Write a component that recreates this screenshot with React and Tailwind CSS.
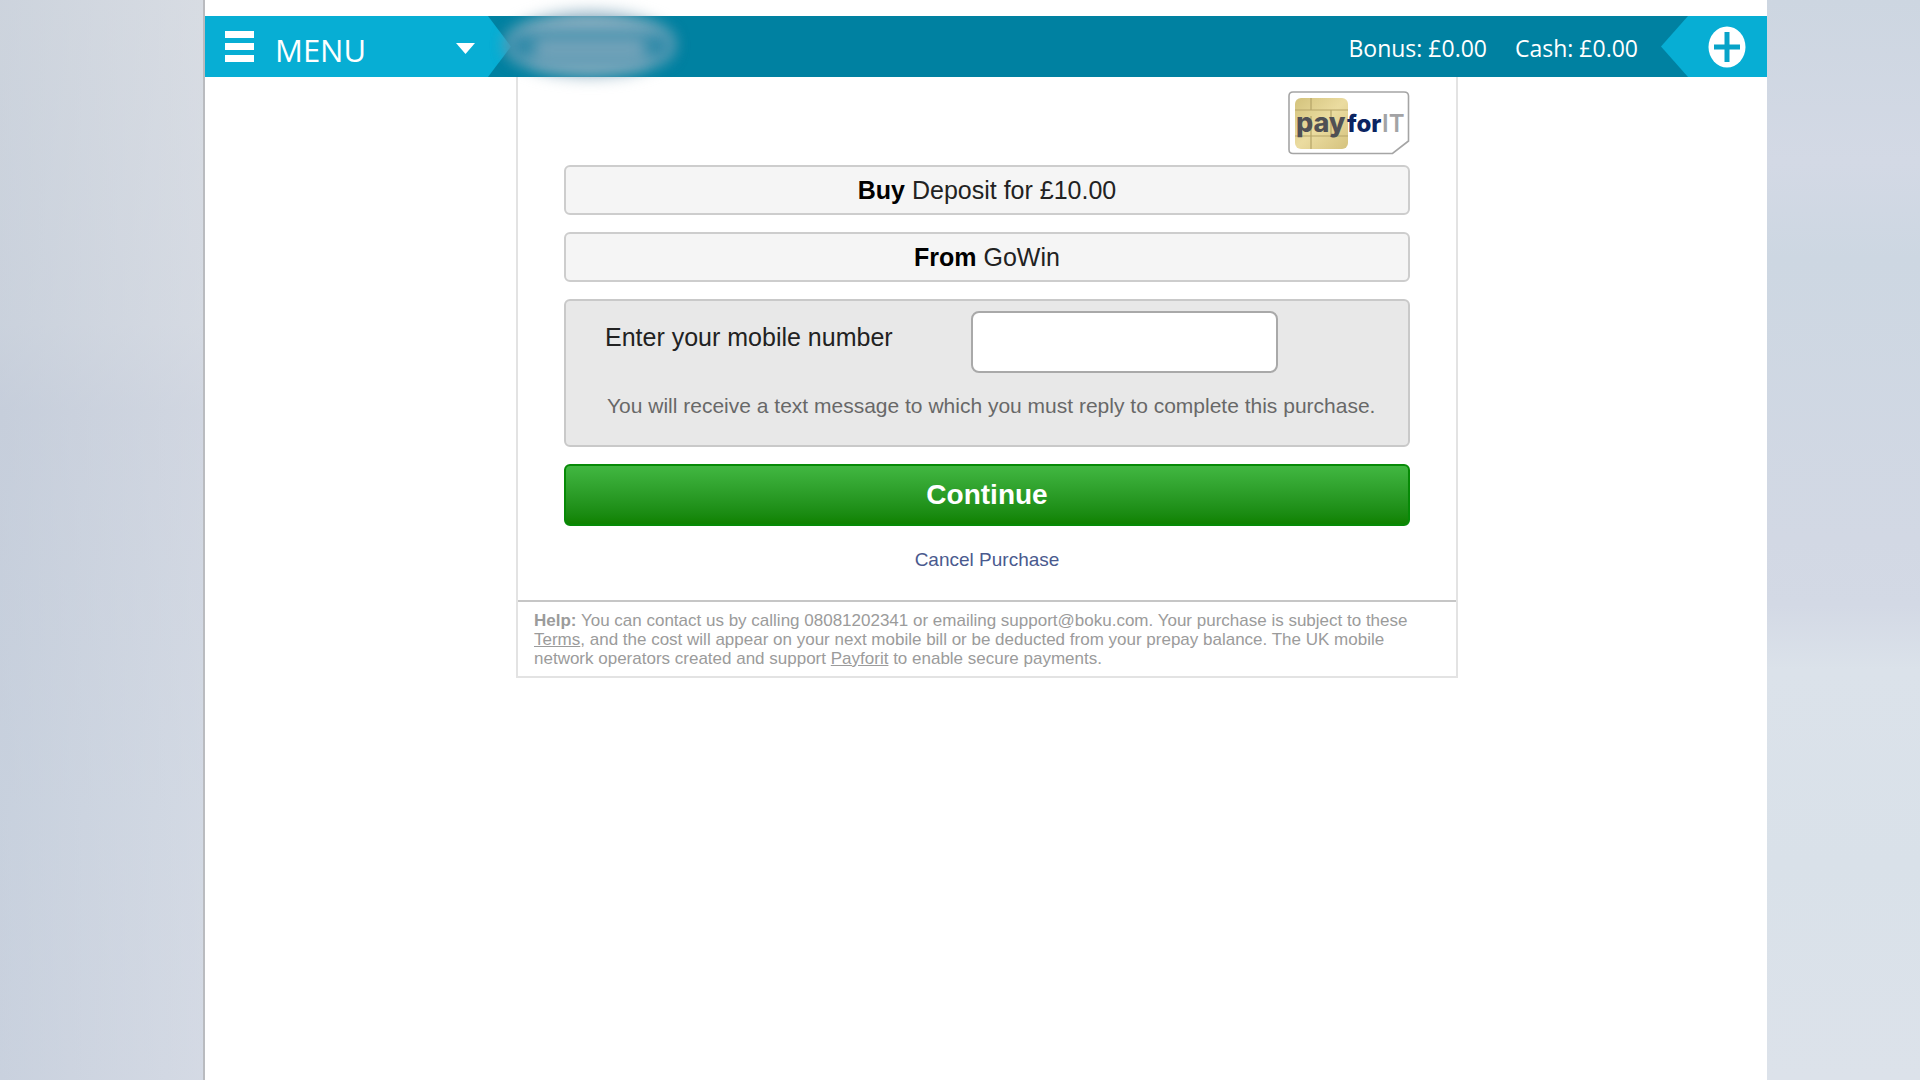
import { useState } from "react";

// =====================================================
// ICONS
// =====================================================

const PlusCircle = () => (
  <svg className="h-[42px] w-[38px]" viewBox="0 0 38 42" aria-hidden="true">
    <ellipse cx="19" cy="21" rx="18.5" ry="20.5" fill="#fff" />
    <path d="M19 6v30M6 21h26" stroke="#07a3c8" strokeWidth="5" />
  </svg>
);

const PayforitLogo = () => (
  <svg
    className="h-[64px] w-[122px]"
    viewBox="0 0 122 64"
    role="img"
    aria-label="payforit"
  >
    <defs>
      <linearGradient id="chip" x1="0" y1="0" x2="1" y2="1">
        <stop offset="0" stopColor="#d3c27c" />
        <stop offset="0.5" stopColor="#ebdca0" />
        <stop offset="1" stopColor="#d5c27e" />
      </linearGradient>
    </defs>
    {/* SIM card outline */}
    <path
      d="M5 1H116Q120.500 1 120.500 5V50L104.500 62.500H5Q1 62.500 1 58.500V5Q1 1 5 1Z"
      fill="#fff"
      stroke="#a5a5a5"
      strokeWidth="1.600"
    />
    {/* Chip */}
    <rect x="7" y="7" width="53" height="51" rx="6" fill="url(#chip)" />
    <path
      d="M7 19H23V7M23 19H43V45M43 19H60M7 45H60M23 45V58M43 45H60M23 25V45"
      fill="none"
      stroke="#b5a468"
      strokeWidth="1.200"
    />
    <g fontFamily="Inter, sans-serif">
      <text x="8" y="41" fontWeight="800" fontSize="27" fill="#505054">
        pay
      </text>
      <text x="59" y="41" fontWeight="800" fontSize="24" fill="#0b2461">
        for
      </text>
      <text x="94" y="41" fontWeight="600" fontSize="24" fill="#a3a3a5">
        IT
      </text>
    </g>
  </svg>
);

// =====================================================
// HEADER
// =====================================================

const Header = () => (
  <header className="relative flex h-[61px] items-stretch justify-between bg-[#0081a1] font-['Open_Sans','Noto_Sans',sans-serif] text-white">
    <button
      type="button"
      className="flex w-[306px] items-center bg-[#07aed4] pl-5 [clip-path:polygon(0_0,283px_0,100%_50%,283px_100%,0_100%)]"
    >
      <span className="flex flex-col gap-[5px]">
        <span className="h-[7px] w-[29px] bg-white" />
        <span className="h-[7px] w-[29px] bg-white" />
        <span className="h-[7px] w-[29px] bg-white" />
      </span>
      <span className="ml-[21px] pt-[6px] text-[31px] leading-10">MENU</span>
      <svg
        className="ml-auto mr-9 mt-1 h-[11px] w-[19px]"
        viewBox="0 0 19 11"
        aria-hidden="true"
      >
        <path d="M0 0h19l-9.500 11z" fill="#fff" />
      </svg>
    </button>

    {/* Obscured brand name */}
    <div
      className="absolute -top-1 left-[302px] h-[64px] w-[166px]"
      aria-hidden="true"
    >
      <div className="size-full rounded-[50%] bg-[#8fb0c2] blur-[8px]" />
      <div className="absolute inset-x-0 top-5 h-7 rounded-full bg-[#2f8aa9] blur-[8px]" />
      <div className="absolute inset-x-7 top-6 h-7 rounded-lg bg-[#6fa1b8] blur-[7px]" />
    </div>

    <div className="flex items-stretch">
      <div className="flex items-center gap-7 pr-[23px] pt-[2px] text-[23px] leading-8">
        <span>Bonus: £0.00</span>
        <span>Cash: £0.00</span>
      </div>
      <button
        type="button"
        aria-label="Add funds"
        className="flex w-[106px] items-center justify-end bg-[#07aed4] pr-[21px] [clip-path:polygon(27px_0,100%_0,100%_100%,27px_100%,0_50%)]"
      >
        <PlusCircle />
      </button>
    </div>
  </header>
);

// =====================================================
// PAYMENT CARD
// =====================================================

const SummaryRow = ({ label, value }) => (
  <p className="rounded-md border-2 border-[#cdcdcd] bg-[#f5f5f5] pb-[7px] pt-[7px] text-center text-[25px] leading-8 text-[#222]">
    <b className="text-black">{label}</b> {value}
  </p>
);

const PaymentForm = () => {
  const [mobile, setMobile] = useState("");

  return (
    <form
      className="flex flex-col px-[46px] pb-7 pt-[14px]"
      onSubmit={(e) => e.preventDefault()}
    >
      <div className="mb-[10px] flex justify-end">
        <PayforitLogo />
      </div>

      <div className="flex flex-col gap-[17px]">
        <SummaryRow label="Buy" value="Deposit for £10.00" />
        <SummaryRow label="From" value="GoWin" />

        <div className="rounded-md border-2 border-[#c9c9c9] bg-[#e8e8e8] pb-[27px] pl-[39px] pr-[130px] pt-[10px]">
          <div className="flex items-start justify-between">
            <label
              htmlFor="mobile"
              className="pt-[10px] text-[25px] leading-8 text-[#222]"
            >
              Enter your mobile number
            </label>
            <input
              id="mobile"
              type="tel"
              value={mobile}
              onChange={(e) => setMobile(e.target.value)}
              className="h-[62px] w-[307px] rounded-lg border-2 border-[#a9a9a9] bg-white px-3 text-[25px]"
            />
          </div>
          <p className="mt-[21px] whitespace-nowrap pl-[2px] text-[21px] leading-6 text-[#686868]">
            You will receive a text message to which you must reply to complete
            this purchase.
          </p>
        </div>

        <button
          type="submit"
          className="h-[62px] rounded-md border-2 border-[#078a07] bg-linear-to-b from-[#41b741] to-[#0f8200] text-[28px] font-bold leading-8 text-white"
        >
          Continue
        </button>
      </div>

      <a
        href="#cancel"
        className="mt-[22px] self-center text-[19px] leading-6 text-[#4a5a8e]"
      >
        Cancel Purchase
      </a>
    </form>
  );
};

const HelpText = () => (
  <p className="border-t-2 border-[#c6c6c6] px-4 pb-2 pt-[9px] text-[17px] leading-[19px] text-[#9b9b9b]">
    <b>Help:</b> You can contact us by calling 08081202341 or emailing
    support@boku.com. Your purchase is subject to these{" "}
    <a href="#terms" className="underline">
      Terms
    </a>
    , and the cost will appear on your next mobile bill or be deducted from your
    prepay balance. The UK mobile network operators created and support{" "}
    <a href="#payforit" className="underline">
      Payforit
    </a>{" "}
    to enable secure payments.
  </p>
);

// =====================================================
// PAGE
// =====================================================

export default function App() {
  return (
    <div className="grid min-h-screen grid-cols-[205fr_1562fr_153fr] bg-white font-['Liberation_Sans',Arial,sans-serif]">
      <div className="border-r-2 border-[#b9bbbf] bg-[linear-gradient(to_right,#c4ccda80,#dadde680),linear-gradient(to_bottom,#d5dbe0,#d0d7df_30%,#c8d0dc_38%,#cbd5e1_75%,#ced6e2)]" />

      <div className="min-w-0 bg-white pt-4">
        <Header />
        <div className="pl-[2px]">
          <main className="mx-auto w-full max-w-[942px] border-2 border-t-0 border-[#e3e3e3]">
            <PaymentForm />
            <HelpText />
          </main>
        </div>
      </div>

      <div className="bg-[linear-gradient(to_bottom,#cdd6e1,#d3d9e5_15%,#cdd7e2_24%,#d2d8e4_50%,#d3d9e5_56%,#dbe2ea_62%,#d9e1e9_80%,#dce2ea)]" />
    </div>
  );
}
